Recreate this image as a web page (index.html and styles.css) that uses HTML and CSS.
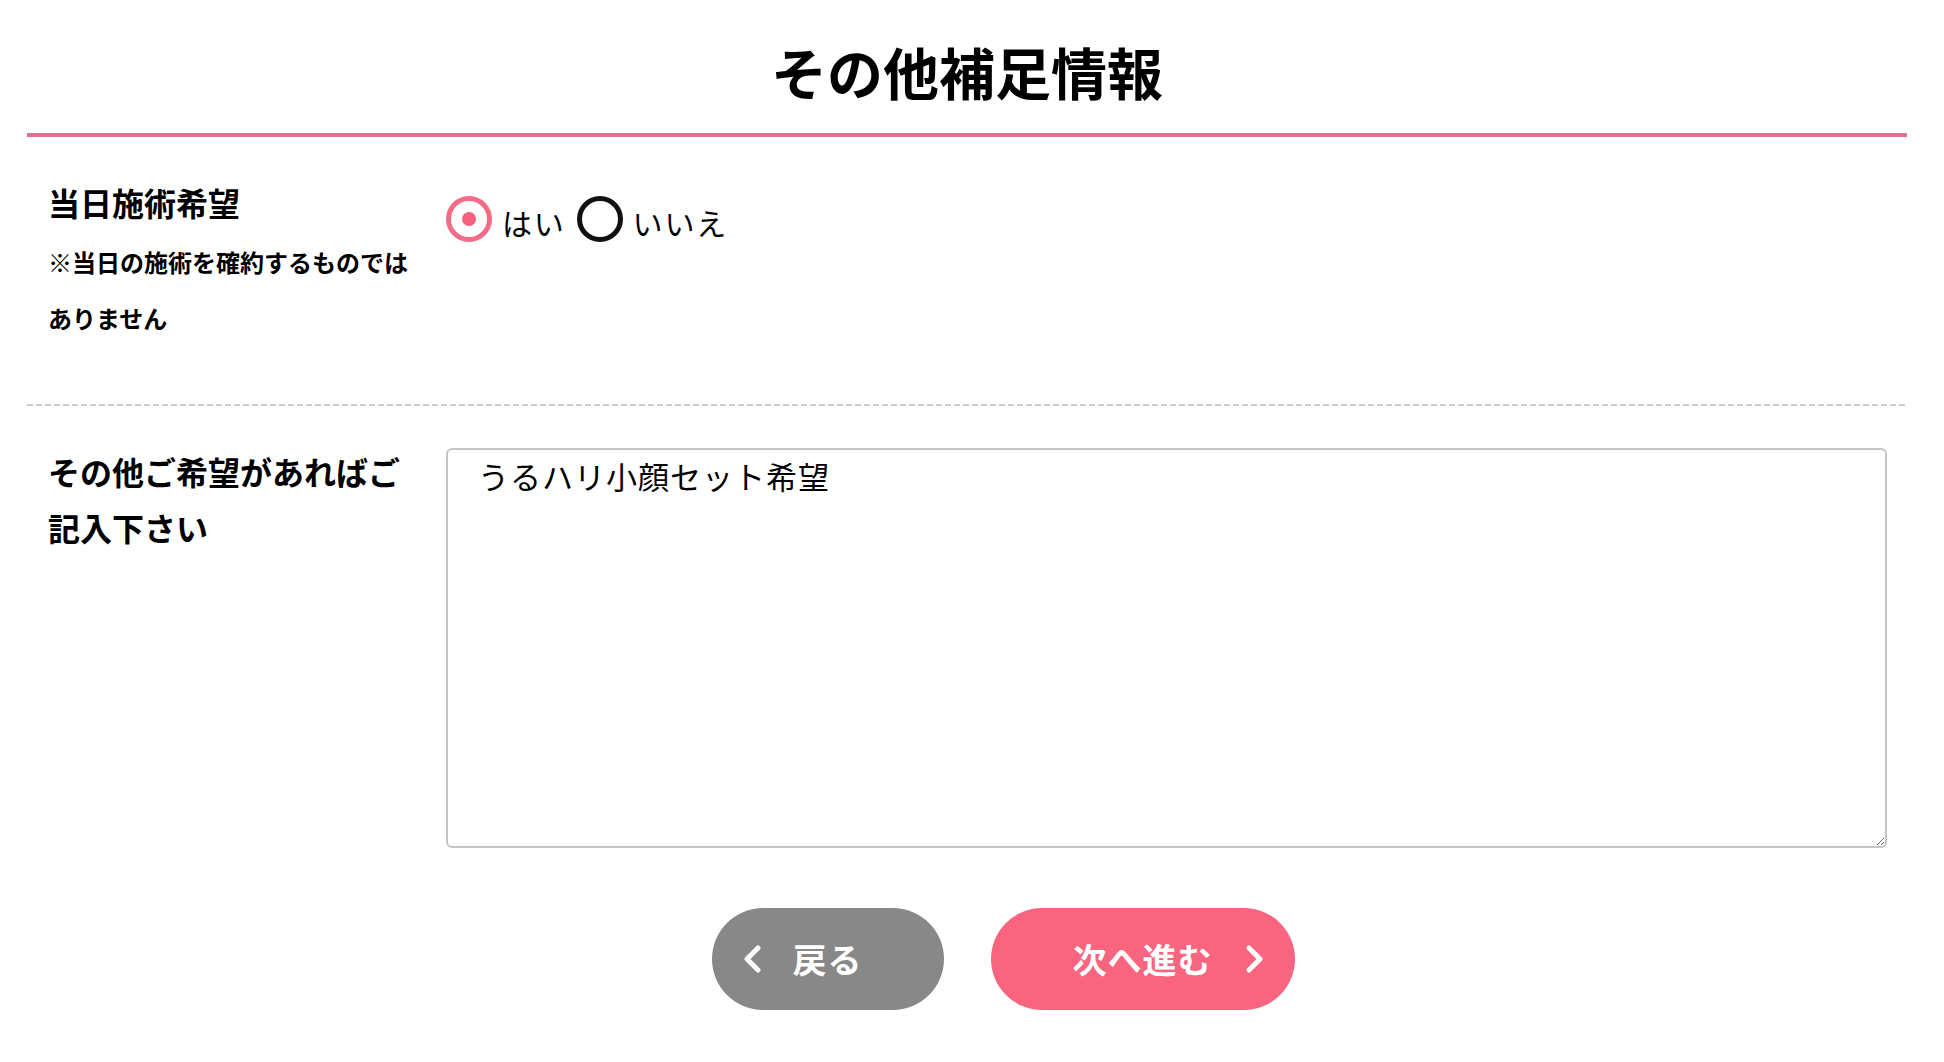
FILE: index.html
```html
<!DOCTYPE html>
<html lang="ja">
<head>
<meta charset="utf-8">
<title>その他補足情報</title>
<link rel="stylesheet" href="styles.css">
</head>
<body>
<div class="page">
  <h1 class="title">その他補足情報</h1>

  <div class="row row-first">
    <div class="label">
      <p class="label-main">当日施術希望</p>
      <p class="note">※当日の施術を確約するものではありません</p>
    </div>
    <div class="field radios">
      <label class="radio">
        <input type="radio" name="today" checked>
        <span class="rtext">はい</span>
      </label>
      <label class="radio">
        <input type="radio" name="today">
        <span class="rtext">いいえ</span>
      </label>
    </div>
  </div>

  <div class="divider"></div>

  <div class="row row-second">
    <div class="label label-second">
      <p class="label-main">その他ご希望があればご記入下さい</p>
    </div>
    <div class="field">
      <textarea class="memo">うるハリ小顔セット希望</textarea>
    </div>
  </div>

  <div class="actions">
    <button class="btn btn-back" type="button">
      <svg class="chev chev-left" width="18" height="30" viewBox="0 0 18 30"><polyline points="15,4 4,15 15,26" fill="none" stroke="#fff" stroke-width="5" stroke-linecap="round" stroke-linejoin="round"/></svg>
      <span>戻る</span>
    </button>
    <button class="btn btn-next" type="button">
      <span>次へ進む</span>
      <svg class="chev chev-right" width="18" height="30" viewBox="0 0 18 30"><polyline points="3,4 14,15 3,26" fill="none" stroke="#fff" stroke-width="5" stroke-linecap="round" stroke-linejoin="round"/></svg>
    </button>
  </div>
</div>
</body>
</html>
```

FILE: styles.css
```css
* {
  box-sizing: border-box;
}

html, body {
  margin: 0;
  padding: 0;
  background: #fff;
}

body {
  font-family: "Noto Sans CJK JP", "Noto Sans", sans-serif;
  color: #000;
}

.page {
  width: 1880px;
  margin-left: 27px;
}

.title {
  margin: 0;
  padding: 31px 0 22px;
  font-size: 56px;
  line-height: 80px;
  font-weight: 700;
  text-align: center;
  letter-spacing: 0;
  border-bottom: 4px solid #dd728a;
}

.row {
  display: flex;
  padding-left: 21px;
  padding-right: 20px;
}

.row-first {
  padding-top: 37px;
  padding-bottom: 58px;
}

.row-second {
  padding-top: 42px;
}

.label {
  width: 398px;
  flex: none;
  padding-right: 30px;
}

.label-second {
  margin-top: -5px;
}

.label p {
  margin: 0;
}

.label-main {
  font-size: 32px;
  line-height: 56px;
  font-weight: 700;
}

.label .note {
  font-size: 24px;
  line-height: 56px;
  font-weight: 700;
  margin-top: 4px;
}

.field {
  flex: 1;
}

.radios {
  display: flex;
  align-items: center;
  height: 56px;
  margin-top: 17px;
}

.radio {
  display: flex;
  align-items: center;
  margin-right: 11px;
  cursor: pointer;
}

.radio input {
  appearance: none;
  -webkit-appearance: none;
  margin: 0 10px 0 0;
  width: 46px;
  height: 46px;
  border: 5px solid #111;
  border-radius: 50%;
  background: #fff;
  position: relative;
}

.radio input:checked {
  border-color: #f36b86;
}

.radio input:checked::after {
  content: "";
  position: absolute;
  left: 50%;
  top: 50%;
  width: 14px;
  height: 14px;
  margin: -7px 0 0 -7px;
  border-radius: 50%;
  background: #f6607f;
}

.rtext {
  font-size: 30px;
  line-height: 40px;
  letter-spacing: 1.8px;
  padding-top: 6px;
}

.divider {
  height: 2px;
  background-image: repeating-linear-gradient(90deg, #cccccc 0, #cccccc 6px, transparent 6px, transparent 9px);
}

.memo {
  display: block;
  width: 1441px;
  height: 400px;
  margin: 0;
  padding: 2px 30px;
  border: 2px solid #c4c4c4;
  border-radius: 6px;
  font-family: "Noto Sans CJK JP", "Noto Sans", sans-serif;
  font-size: 31px;
  line-height: 48px;
  letter-spacing: 1px;
  color: #000;
  background: #fff;
  resize: vertical;
  outline: none;
}

.actions {
  display: flex;
  justify-content: center;
  gap: 47px;
  padding-left: 72px;
  margin-top: 60px;
}

.btn {
  position: relative;
  display: flex;
  align-items: center;
  justify-content: center;
  height: 102px;
  border: none;
  border-radius: 51px;
  color: #fff;
  font-family: "Noto Sans CJK JP", "Noto Sans", sans-serif;
  font-size: 34px;
  font-weight: 700;
  letter-spacing: 1px;
  cursor: pointer;
  padding: 0;
}

.btn span {
  line-height: 1;
}

.btn-back {
  width: 232px;
  background: #888888;
}

.btn-next {
  width: 304px;
  background: #f9657f;
}

.chev {
  position: absolute;
  top: 36px;
}

.chev-left {
  left: 31px;
}

.chev-right {
  right: 31px;
}
```
